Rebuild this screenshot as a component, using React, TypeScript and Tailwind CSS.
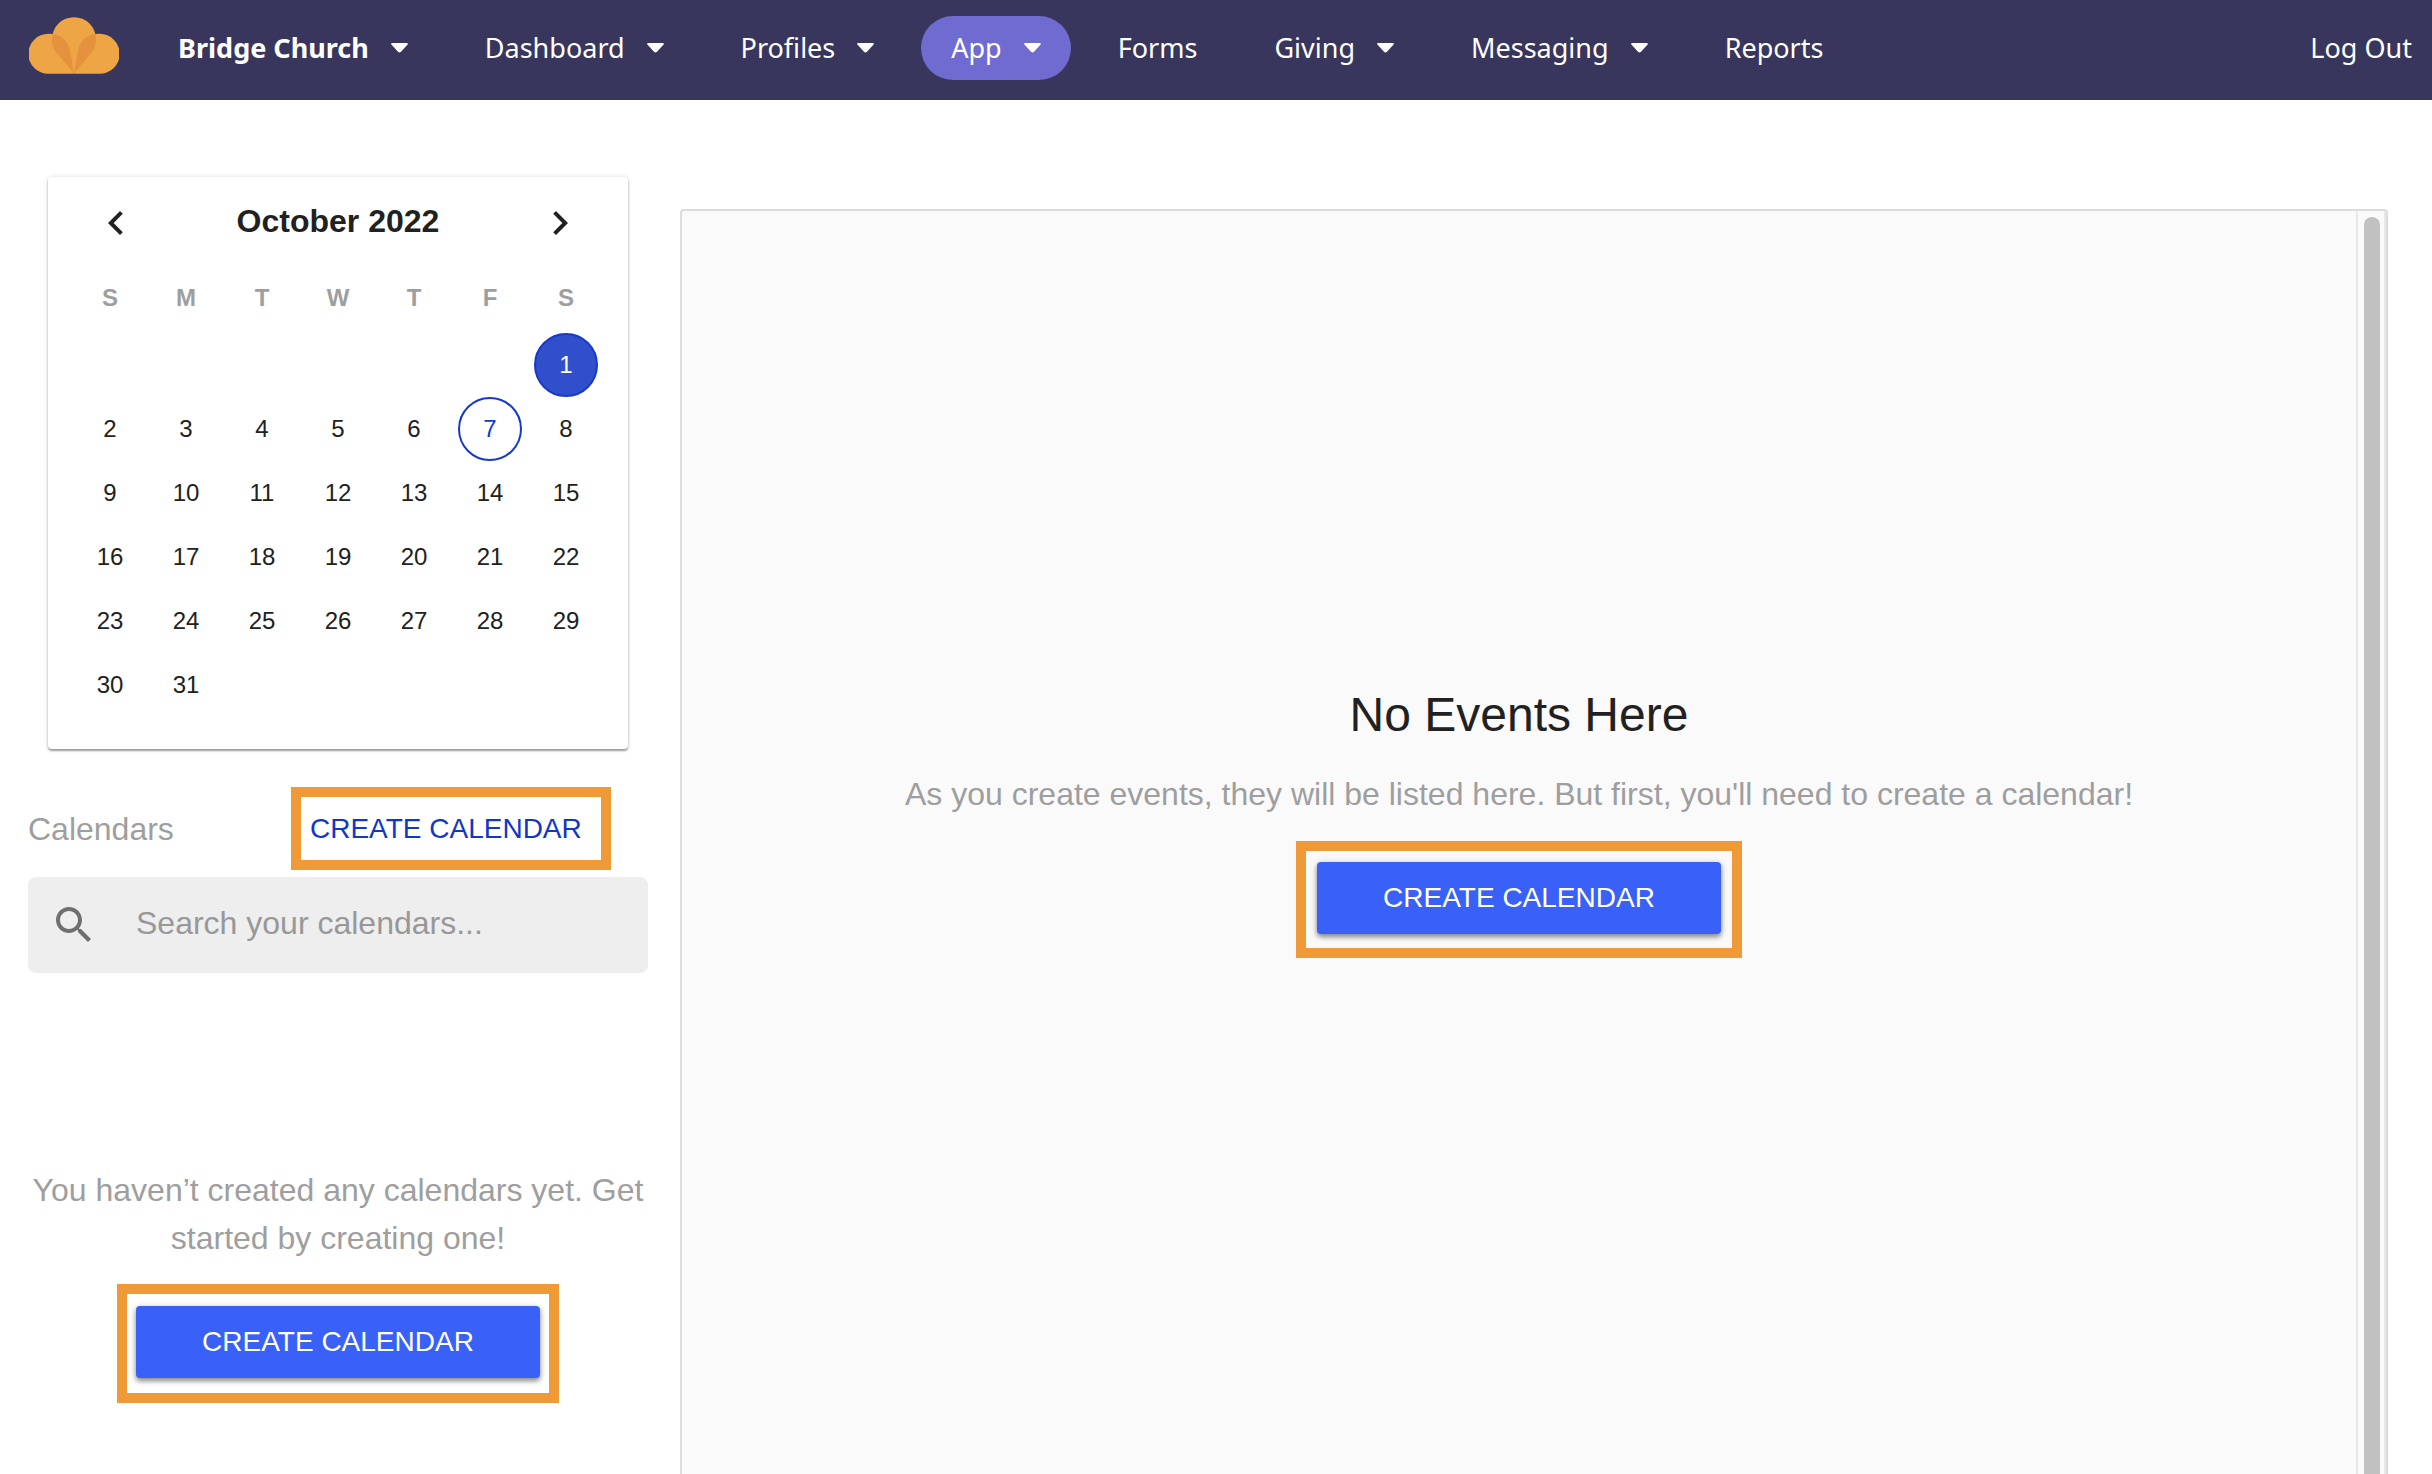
import clsx from "clsx";
import type { ReactNode } from "react";

interface NavItem {
  label: string;
  menu?: boolean;
  active?: boolean;
  bold?: boolean;
}

const navItems: NavItem[] = [
  { label: "Bridge Church", menu: true, bold: true },
  { label: "Dashboard", menu: true },
  { label: "Profiles", menu: true },
  { label: "App", menu: true, active: true },
  { label: "Forms" },
  { label: "Giving", menu: true },
  { label: "Messaging", menu: true },
  { label: "Reports" },
];

const weekdays = ["S", "M", "T", "W", "T", "F", "S"];
const FIRST_WEEKDAY = 6;
const DAYS_IN_MONTH = 31;
const SELECTED_DAY = 1;
const TODAY = 7;

const weeks = Array.from({ length: 6 }, (_, week) =>
  Array.from({ length: 7 }, (_, day) => {
    const date = week * 7 + day - FIRST_WEEKDAY + 1;
    return date > 0 && date <= DAYS_IN_MONTH ? date : null;
  })
);

const SIDE_PETAL = "M58 170A60 60 0 0 1 58 50C94 50 114 66 122 96C129 122 130 148 135 170Z";
const MIDDLE_PETAL =
  "M135 168L84 108C72 94 69 82 69 66A66 66 0 0 1 201 66C201 82 198 94 186 108Z";

function Logo() {
  return (
    <svg viewBox="0 0 270 170" className="h-[57px] w-[90px]" aria-hidden="true">
      <defs>
        <clipPath id="middle-petal">
          <path d={MIDDLE_PETAL} />
        </clipPath>
      </defs>
      <g fill="#eda545">
        <path d={SIDE_PETAL} />
        <path d={SIDE_PETAL} transform="matrix(-1 0 0 1 270 0)" />
        <path d={MIDDLE_PETAL} />
      </g>
      <g fill="#e4923d" clipPath="url(#middle-petal)">
        <path d={SIDE_PETAL} />
        <path d={SIDE_PETAL} transform="matrix(-1 0 0 1 270 0)" />
      </g>
    </svg>
  );
}

function Caret() {
  return (
    <svg viewBox="0 0 17 10" className="h-[10px] w-[17px]" fill="currentColor" aria-hidden="true">
      <path d="M1.4 0H15.6C16.8 0 17.2 1 16.4 1.8L10 8.8C9.1 9.8 7.9 9.8 7 8.8L.6 1.8C-.2 1 .2 0 1.4 0Z" />
    </svg>
  );
}

function Header() {
  return (
    <header className="flex h-[100px] items-start justify-between bg-[#38365d] pr-5 pl-[29px] pt-4 font-['Noto_Sans',sans-serif] text-[27px] leading-8 text-white">
      <div className="flex">
        <a href="#" aria-label="Home" className="mr-[29px] pt-px">
          <Logo />
        </a>
        <nav className="flex gap-[17px]">
          {navItems.map((item) => {
            const className = clsx(
              "flex h-16 items-center gap-[22px] rounded-full px-[30px]",
              item.active && "bg-[#706bd1]",
              item.bold && "font-bold"
            );
            return item.menu ? (
              <button key={item.label} type="button" className={className}>
                {item.label}
                <Caret />
              </button>
            ) : (
              <a key={item.label} href="#" className={className}>
                {item.label}
              </a>
            );
          })}
        </nav>
      </div>
      <a href="#" className="flex h-16 items-center">
        Log Out
      </a>
    </header>
  );
}

function MonthCalendar() {
  return (
    <section className="mx-5 rounded-[4px] bg-white px-6 pt-[22px] pb-8 shadow-[0_2px_2px_rgba(0,0,0,0.35),0_0_5px_rgba(0,0,0,0.14)]">
      <div className="flex h-12 items-center justify-between px-5">
        <button type="button" aria-label="Previous month">
          <svg viewBox="0 0 24 24" className="size-12" fill="currentColor">
            <path d="M15.41 7.41L14 6l-6 6 6 6 1.41-1.41L10.83 12z" />
          </svg>
        </button>
        <h2 className="pb-1 text-[32px] leading-9 font-bold">October 2022</h2>
        <button type="button" aria-label="Next month">
          <svg viewBox="0 0 24 24" className="size-12" fill="currentColor">
            <path d="M10 6L8.59 7.41 13.17 12l-4.58 4.59L10 18l6-6z" />
          </svg>
        </button>
      </div>
      <table className="mt-4 w-full table-fixed text-center text-2xl">
        <thead>
          <tr className="h-[70px] text-[#9e9e9e]">
            {weekdays.map((day, index) => (
              <th key={index} className="p-0 font-bold">
                {day}
              </th>
            ))}
          </tr>
        </thead>
        <tbody>
          {weeks.map((week, index) => (
            <tr key={index} className="h-16">
              {week.map((date, day) => (
                <td key={day} className="p-0">
                  {date && (
                    <button
                      type="button"
                      className={clsx(
                        "mx-auto flex size-16 items-center justify-center rounded-full",
                        date === SELECTED_DAY && "border-2 border-[#1639cb] bg-[#314fcb] text-white",
                        date === TODAY && "border-2 border-[#1639cb] text-[#1639cb]"
                      )}
                    >
                      {date}
                    </button>
                  )}
                </td>
              ))}
            </tr>
          ))}
        </tbody>
      </table>
    </section>
  );
}

// Orange frame that draws attention to a call to action
function Highlight({ className, children }: { className?: string; children: ReactNode }) {
  return <div className={clsx("border-[10px] border-[#f09937]", className)}>{children}</div>;
}

function CreateButton() {
  return (
    <button
      type="button"
      className="flex h-[72px] w-[404px] items-center justify-center rounded-[4px] bg-[#3961f7] text-[28px] text-white shadow-[0_3px_5px_rgba(0,0,0,0.4),0_1px_8px_rgba(0,0,0,0.15)]"
    >
      CREATE CALENDAR
    </button>
  );
}

function Sidebar() {
  return (
    <aside className="w-[620px] shrink-0 pt-[77px]">
      <MonthCalendar />
      <div className="mt-[38px] flex items-center justify-between pr-[37px]">
        <h3 className="text-[32px] text-[#9e9e9e]">Calendars</h3>
        <Highlight className="w-80">
          <button type="button" className="flex h-[63px] items-center px-[9px] text-[28px] text-[#1237c4]">
            CREATE CALENDAR
          </button>
        </Highlight>
      </div>
      <label className="mt-[7px] flex h-24 items-center rounded-lg bg-[#eeeeee] pl-[22px]">
        <svg viewBox="0 0 24 24" className="size-12 shrink-0 text-[#6f6f6f]" fill="currentColor">
          <path d="M15.5 14h-.79l-.28-.27C15.41 12.59 16 11.11 16 9.5 16 5.91 13.09 3 9.5 3S3 5.91 3 9.5 5.91 16 9.5 16c1.61 0 3.09-.59 4.23-1.57l.27.28v.79l5 4.99L20.49 19l-4.99-5zm-6 0C7.01 14 5 11.99 5 9.5S7.01 5 9.5 5 14 7.01 14 9.5 11.99 14 9.5 14z" />
        </svg>
        <input
          type="search"
          aria-label="Search your calendars"
          placeholder="Search your calendars..."
          className="h-full min-w-0 flex-1 bg-transparent pb-1 pl-[38px] text-[32px] outline-none placeholder:text-[#989898]"
        />
      </label>
      <div className="mt-[193px] flex flex-col items-center">
        <p className="text-center text-[32px] leading-[48px] text-[#9e9e9e]">
          You haven’t created any calendars yet. Get started by creating one!
        </p>
        <Highlight className="mt-[22px] px-[9px] pt-3 pb-[15px]">
          <CreateButton />
        </Highlight>
      </div>
    </aside>
  );
}

function EventsPanel() {
  return (
    <section className="mt-[109px] flex min-w-0 flex-1 rounded-t-[4px] border-2 border-b-0 border-[#dcdcdc] bg-[#fafafa]">
      <div className="flex min-w-0 flex-1 flex-col items-center pt-[472px]">
        <h1 className="text-5xl leading-[64px]">No Events Here</h1>
        <p className="mt-[23px] text-center text-[32px] leading-[48px] text-[#9e9e9e]">
          As you create events, they will be listed here. But first, you'll need to create a calendar!
        </p>
        <Highlight className="mt-[23px] px-[11px] pt-[11px] pb-[14px]">
          <CreateButton />
        </Highlight>
      </div>
      {/* scroll track, the thumb runs on past the fold */}
      <div className="flex w-[30px] border-x-2 border-[#e8e8e8] pt-[6px] pl-[6px]">
        <div className="w-4 rounded-t-full bg-[#c1c1c1]" />
      </div>
    </section>
  );
}

export default function App() {
  return (
    <div className="flex h-screen flex-col overflow-hidden bg-white font-['Liberation_Sans',Arial,sans-serif] text-[#212121]">
      <Header />
      <main className="flex min-h-0 flex-1 gap-8 pr-11 pl-7">
        <Sidebar />
        <EventsPanel />
      </main>
    </div>
  );
}
